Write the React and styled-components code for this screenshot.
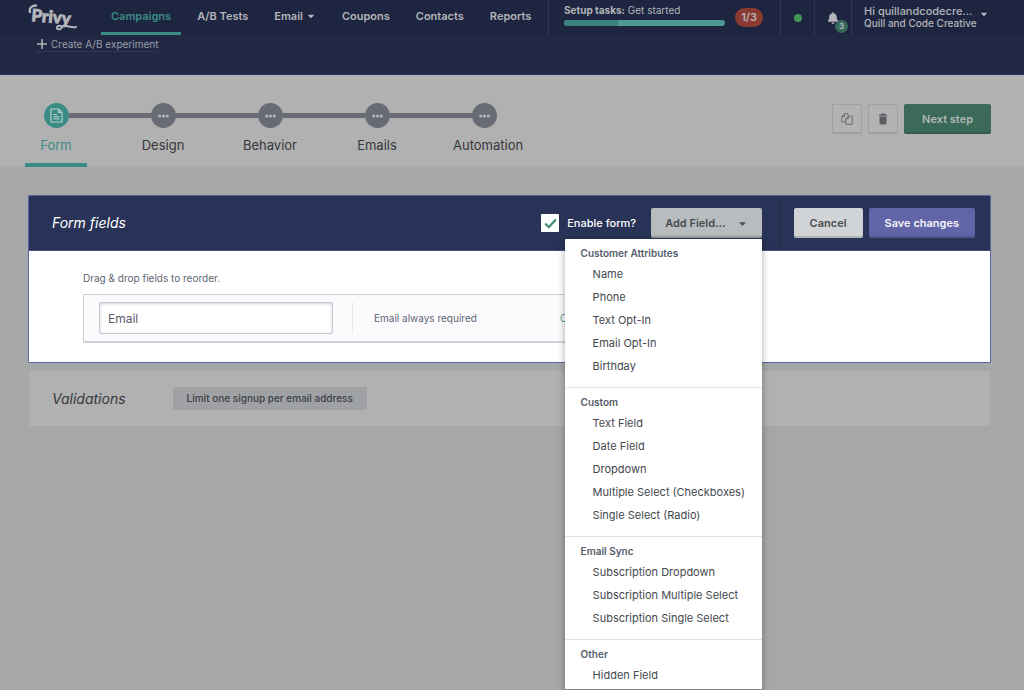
import React from 'react'
import styled, { createGlobalStyle } from 'styled-components'
import { FaBell, FaCaretDown } from 'react-icons/fa'

const GlobalStyle = createGlobalStyle`
* {
  box-sizing: border-box;
}
body {
  margin: 0;
  background: #a6a7a9;
  font-family: Inter, "Liberation Sans", sans-serif;
  font-size: 11px;
  line-height: 16px;
  color: #35383c;
}
button, input {
  font-family: inherit;
}
a {
  color: inherit;
  text-decoration: none;
}
`

const Page = styled.div`
min-height: 100vh;
overflow: hidden;
`
const NavBar = styled.header`
display: flex;
height: 35px;
background: #1e2540;
color: #b3b5ba;
`
const Logo = styled.a`
display: flex;
width: 50px;
margin: 0 23px 0 28px;
`
const Tabs = styled.nav`
display: flex;
flex: 1;
gap: 6px;
`
const Tab = styled.a`
display: flex;
align-items: center;
gap: 3px;
padding: 0 10px;
font-weight: 600;
white-space: nowrap;
color: ${(props) => (props.$active ? '#3b8c85' : '#b3b5ba')};
border-bottom: 3px solid ${(props) => (props.$active ? '#3b8c85' : 'transparent')};
`
const NavCell = styled.div`
display: flex;
align-items: center;
justify-content: ${(props) => (props.$start ? 'flex-start' : 'center')};
gap: 10px;
width: ${(props) => props.$width}px;
padding: ${(props) => props.$pad || '0'};
border-left: 1px solid #2f3652;
`
const Setup = styled.div`
flex: 1;
padding-bottom: 6px;
font-size: 10px;
line-height: 14px;
white-space: nowrap;
`
const Track = styled.div`
display: flex;
height: 6px;
margin-top: 3px;
border-radius: 3px;
overflow: hidden;
background: #4d9a94;
`
const TrackDone = styled.div`
background: #3b827c;
`
const TaskCount = styled.span`
padding: 0 6px;
border-radius: 10px;
background: #8a3a30;
font-weight: 600;
line-height: 19px;
`
const OnlineDot = styled.span`
width: 8px;
height: 8px;
border-radius: 50%;
background: #459553;
`
const BellButton = styled.button`
position: relative;
display: flex;
padding: 0;
border: 0;
background: none;
color: #b3b5ba;
`
const BellCount = styled.span`
position: absolute;
top: 8px;
left: 8px;
width: 13px;
height: 13px;
border-radius: 50%;
background: #38695a;
font-size: 8px;
font-weight: 700;
line-height: 13px;
text-align: center;
`
const Account = styled.button`
display: flex;
align-items: flex-start;
gap: 2px;
padding: 0 0 2px;
border: 0;
background: none;
color: #b3b5ba;
font-size: 10px;
font-weight: 500;
line-height: 12px;
text-align: left;
white-space: nowrap;
svg {
  margin-top: 4px;
}
`
const AccountName = styled.span`
display: block;
font-size: 11px;
`
const SubBar = styled.div`
height: 40px;
padding: 2px 37px;
background: #212843;
border-bottom: 1px solid #2c3665;
`
const CreateLink = styled.a`
display: inline-flex;
align-items: center;
gap: 4px;
color: #9a9daa;
font-size: 10px;
line-height: 14px;
border-bottom: 1px dotted #3f4661;
`
const StepsBar = styled.section`
display: flex;
justify-content: space-between;
height: 93px;
padding: 0 33px 0 25px;
background: #b1b1b1;
border-bottom: 1px solid #a9aaae;
`
const StepList = styled.ol`
display: flex;
gap: 45px;
margin: 0;
padding: 0;
list-style: none;
`
const Step = styled.li`
display: flex;
flex-direction: column;
width: 62px;
padding-top: 28px;
border-bottom: 4px solid ${(props) => (props.$active ? '#3b8c85' : 'transparent')};
color: ${(props) => (props.$active ? '#3b8c85' : '#35383c')};
`
const Rail = styled.div`
display: flex;
align-items: center;
margin: 0 -23px;
`
const RailLine = styled.span`
flex: 1;
height: 5px;
background: ${(props) => (props.$hidden ? 'transparent' : '#686b74')};
`
const StepDot = styled.span`
display: flex;
align-items: center;
justify-content: center;
width: 25px;
height: 25px;
border-radius: 50%;
background: ${(props) => (props.$active ? '#3b8c85' : '#686b74')};
`
const StepLabel = styled.a`
margin-top: 7px;
font-size: 13px;
line-height: 20px;
text-align: center;
white-space: nowrap;
`
const StepActions = styled.div`
display: flex;
gap: 6px;
padding-top: 29px;
`
const Button = styled.button`
display: flex;
align-items: center;
justify-content: center;
gap: 11px;
height: 30px;
padding: 0 ${(props) => props.$pad || 16}px;
border: 0;
border-radius: 2px;
box-shadow: inset 0 -2px 1px rgba(0, 0, 0, 0.15);
background: ${(props) => props.$bg};
color: ${(props) => props.$color};
font-size: 11px;
font-weight: 600;
white-space: nowrap;
`
const IconButton = styled.button`
display: flex;
align-items: center;
justify-content: center;
width: 30px;
height: 30px;
padding: 0;
border: 1px solid #9fa0a1;
border-bottom-width: 2px;
border-radius: 2px;
background: #b3b3b3;
`
const Main = styled.main`
display: flex;
flex-direction: column;
gap: 8px;
padding: 27px 33px 28px 28px;
`
const Panel = styled.section`
border: 1px solid #5a64a0;
border-radius: 1px;
background: #fff;
`
const PanelHeader = styled.div`
display: flex;
align-items: stretch;
height: 55px;
padding-left: 23px;
background: #293357;
border-bottom: 1px solid #434c86;
color: #fff;
`
const Title = styled.h2`
margin: 0;
align-self: center;
font-size: 14px;
font-weight: 400;
font-style: italic;
`
const HeaderControls = styled.div`
display: flex;
align-items: center;
flex: 1;
justify-content: flex-end;
gap: 15px;
padding-right: 17px;
`
const HeaderButtons = styled.div`
display: flex;
align-items: center;
gap: 6px;
padding: 0 15px 0 14px;
border-left: 1px solid #232b4b;
`
const EnableLabel = styled.label`
display: flex;
align-items: center;
gap: 8px;
font-weight: 500;
white-space: nowrap;
`
const CheckWrap = styled.span`
display: grid;
place-items: center;
> * {
  grid-area: 1 / 1;
}
svg {
  pointer-events: none;
}
`
const CheckBox = styled.input`
appearance: none;
width: 18px;
height: 18px;
margin: 0;
border-radius: 1px;
background: #fff;
`
const Dropdown = styled.div`
position: relative;
`
const Menu = styled.div`
position: absolute;
top: 31px;
right: 0;
z-index: 2;
width: 197px;
border-radius: 1px;
background: #fff;
box-shadow: 0 2px 7px rgba(0, 0, 0, 0.35);
`
const MenuSection = styled.div`
display: flex;
flex-direction: column;
padding: 5px 0 10px;
border-bottom: 1px solid #e2e3e5;
&:last-child {
  padding-bottom: 3px;
  border-bottom: 0;
}
`
const MenuHeading = styled.h3`
margin: 0;
padding: 0 16px;
font-size: 10px;
font-weight: 600;
line-height: 18px;
color: #545c6b;
`
const MenuItem = styled.button`
height: 23px;
padding: 0 0 0 28px;
border: 0;
background: none;
color: #44484e;
font-size: 11px;
text-align: left;
white-space: nowrap;
`
const PanelBody = styled.div`
padding: 19px 54px;
`
const Hint = styled.p`
margin: 0 0 8px;
font-size: 10px;
color: #5e6672;
`
const FieldRow = styled.div`
display: flex;
align-items: center;
width: 76%;
height: 49px;
padding: 0 15px;
border: 1px solid #cdd1d8;
border-bottom-width: 2px;
border-radius: 1px;
background: #fbfbfd;
font-size: 10px;
color: #5e6672;
white-space: nowrap;
`
const FieldInput = styled.input`
width: 234px;
height: 32px;
padding: 0 8px;
border: 1px solid #c3c9d1;
border-radius: 2px;
box-shadow: inset 0 1px 3px rgba(60, 70, 100, 0.25);
background: #fff;
color: #565d68;
font-size: 12px;
`
const FieldNote = styled.div`
display: grid;
grid-template-columns: 186px auto;
align-items: center;
flex: 1;
height: 32px;
margin-left: 19px;
padding-left: 21px;
border-left: 1px solid #e6e8ed;
`
const RowLink = styled.a`
color: #4a9a86;
`
const Validations = styled.section`
display: flex;
align-items: center;
gap: 47px;
height: 55px;
margin: 0 1px;
padding: 0 23px;
background: #b1b1b1;
`
const Pill = styled.span`
padding: 0 14px;
border-radius: 2px;
background: #9fa1a5;
font-size: 10px;
font-weight: 500;
line-height: 23px;
color: #3d4044;
white-space: nowrap;
`

const steps = ['Form', 'Design', 'Behavior', 'Emails', 'Automation']

const menu = [
  {
    title: 'Customer Attributes',
    items: ['Name', 'Phone', 'Text Opt-In', 'Email Opt-In', 'Birthday'],
  },
  {
    title: 'Custom',
    items: ['Text Field', 'Date Field', 'Dropdown', 'Multiple Select (Checkboxes)', 'Single Select (Radio)'],
  },
  {
    title: 'Email Sync',
    items: ['Subscription Dropdown', 'Subscription Multiple Select', 'Subscription Single Select'],
  },
  {
    title: 'Other',
    items: ['Hidden Field'],
  },
]

const PrivyLogo = () => (
  <svg width="50" height="35" viewBox="0 0 50 35" fill="none" stroke="#b3b5ba" aria-hidden="true">
    <text x="3" y="21" transform="rotate(5 3 21)" fill="#b3b5ba" strokeWidth="0.800" fontFamily="Lato" fontSize="17" fontWeight="900">Privy</text>
    <path d="M2 12C.8 8 4 5.500 8 5.500" strokeWidth="2.400" strokeLinecap="round" />
    <path d="M33 26c-3-1-5 1-4 2.500 1.500 1.500 5 .5 6-2.500 4-1 8 2.500 13 1" strokeWidth="2" strokeLinecap="round" />
  </svg>
)

const DocIcon = () => (
  <svg width="13" height="15" viewBox="0 0 13 15" fill="none" stroke="#b7cfcc" strokeWidth="1.200" aria-hidden="true">
    <path d="M1 1h7.500L12 4.500V14H1zM8.500 1v3.500H12M3.500 6.500h3.500M3.500 8.800h6M3.500 11h6" />
  </svg>
)

const DotsIcon = () => (
  <svg width="11" height="4" viewBox="0 0 11 4" fill="#b7b8bb" aria-hidden="true">
    <circle cx="1.700" cy="2" r="1.600" />
    <circle cx="5.500" cy="2" r="1.600" />
    <circle cx="9.300" cy="2" r="1.600" />
  </svg>
)

const CopyIcon = () => (
  <svg width="12" height="12" viewBox="0 0 12 12" fill="none" stroke="#6b6e72" strokeLinejoin="round" aria-hidden="true">
    <path d="M7 3V.7H3.500L.7 3.500v5.300h3.800M3.500.7v2.800H.7" />
    <path d="M7.300 3.200h4v8.100H4.700V5.900zM7.300 3.200v2.700H4.700" />
  </svg>
)

const TrashIcon = () => (
  <svg width="10" height="12" viewBox="0 0 10 12" fill="#5a5d61" aria-hidden="true">
    <path d="M1.500 3.500h7v7.200Q8.500 11.500 7.700 11.500H2.300Q1.500 11.500 1.500 10.700zM1 1.600H3L3.500.5h3l.5 1.100h2v1.200H1z" />
  </svg>
)

class App extends React.Component {
  state = {
    enabled: true,
    menuOpen: true,
    fieldName: 'Email',
  }

  handleChangeEnabled = (event) => {
    this.setState({ enabled: event.target.checked })
  }

  handleToggleMenu = () => {
    this.setState({ menuOpen: !this.state.menuOpen })
  }

  handleChangeField = (event) => {
    this.setState({ fieldName: event.target.value })
  }

  render() {
    return (
      <Page>
        <GlobalStyle />
        <NavBar>
          <Logo href="#" aria-label="Privy"><PrivyLogo /></Logo>
          <Tabs>
            <Tab href="#" $active>Campaigns</Tab>
            <Tab href="#">A/B Tests</Tab>
            <Tab href="#">Email <FaCaretDown size={10} /></Tab>
            <Tab href="#">Coupons</Tab>
            <Tab href="#">Contacts</Tab>
            <Tab href="#">Reports</Tab>
          </Tabs>
          <NavCell $width={232} $pad="0 17px 0 15px">
            <Setup>
              <b>Setup tasks:</b> Get started
              <Track><TrackDone style={{ width: `${(1 / 3) * 100}%` }} /></Track>
            </Setup>
            <TaskCount>1/3</TaskCount>
          </NavCell>
          <NavCell $width={34}><OnlineDot /></NavCell>
          <NavCell $width={37}>
            <BellButton aria-label="Notifications">
              <FaBell size={12} />
              <BellCount>3</BellCount>
            </BellButton>
          </NavCell>
          <NavCell $width={173} $pad="0 12px" $start>
            <Account>
              <span>
                <AccountName>Hi quillandcodecre...</AccountName>
                Quill and Code Creative
              </span>
              <FaCaretDown size={10} />
            </Account>
          </NavCell>
        </NavBar>
        <SubBar>
          <CreateLink href="#">
            <svg width="10" height="10" viewBox="0 0 10 10" stroke="#b3b5ba" strokeWidth="1.500" aria-hidden="true">
              <path d="M5 0v10M0 5h10" />
            </svg>
            Create A/B experiment
          </CreateLink>
        </SubBar>
        <StepsBar>
          <StepList>
            {steps.map((step, index) => (
              <Step key={step} $active={index === 0}>
                <Rail>
                  <RailLine $hidden={index === 0} />
                  <StepDot $active={index === 0}>{index === 0 ? <DocIcon /> : <DotsIcon />}</StepDot>
                  <RailLine $hidden={index === steps.length - 1} />
                </Rail>
                <StepLabel href="#">{step}</StepLabel>
              </Step>
            ))}
          </StepList>
          <StepActions>
            <IconButton aria-label="Duplicate"><CopyIcon /></IconButton>
            <IconButton aria-label="Delete"><TrashIcon /></IconButton>
            <Button $bg="#3c6a5a" $color="#b0b9b4" $pad={18}>Next step</Button>
          </StepActions>
        </StepsBar>
        <Main>
          <Panel>
            <PanelHeader>
              <Title>Form fields</Title>
              <HeaderControls>
                <EnableLabel>
                  <CheckWrap>
                    <CheckBox type="checkbox" checked={this.state.enabled} onChange={this.handleChangeEnabled} />
                    {this.state.enabled && (
                      <svg width="13" height="11" viewBox="0 0 13 11" fill="none" stroke="#3f8a72" strokeWidth="2.200" aria-hidden="true">
                        <path d="M1.200 5.500l3.600 3.700L11.800 1.500" />
                      </svg>
                    )}
                  </CheckWrap>
                  Enable form?
                </EnableLabel>
                <Dropdown>
                  <Button $bg="#b8bcbe" $color="#484c50" $pad={14} onClick={this.handleToggleMenu}>
                    Add Field... <FaCaretDown size={11} />
                  </Button>
                  {this.state.menuOpen && (
                    <Menu>
                      {menu.map((section) => (
                        <MenuSection key={section.title}>
                          <MenuHeading>{section.title}</MenuHeading>
                          {section.items.map((item) => (
                            <MenuItem key={item}>{item}</MenuItem>
                          ))}
                        </MenuSection>
                      ))}
                    </Menu>
                  )}
                </Dropdown>
              </HeaderControls>
              <HeaderButtons>
                <Button $bg="#d1d4d7" $color="#484c50">Cancel</Button>
                <Button $bg="#6264a8" $color="#f4f4fb">Save changes</Button>
              </HeaderButtons>
            </PanelHeader>
            <PanelBody>
              <Hint>Drag &amp; drop fields to reorder.</Hint>
              <FieldRow>
                <FieldInput type="text" aria-label="Field name" value={this.state.fieldName} onChange={this.handleChangeField} />
                <FieldNote>
                  Email always required
                  <RowLink href="#">Clear</RowLink>
                </FieldNote>
              </FieldRow>
            </PanelBody>
          </Panel>
          <Validations>
            <Title>Validations</Title>
            <Pill>Limit one signup per email address</Pill>
          </Validations>
        </Main>
      </Page>
    )
  }
}

export default App
